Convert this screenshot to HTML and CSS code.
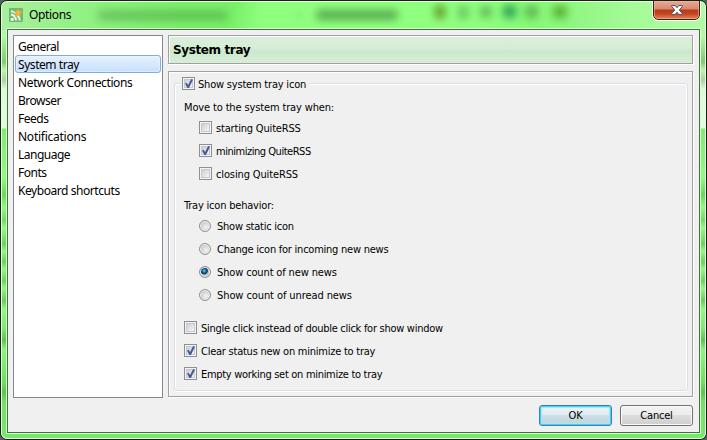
FILE: index.html
```
<!DOCTYPE html>
<html lang="en">
<head>
<meta charset="utf-8">
<title>Options</title>
<link rel="stylesheet" href="styles.css">
</head>
<body>
<div class="window">
  <div class="glass" aria-hidden="true">
    <i class="smudge s1"></i><i class="smudge s2"></i><i class="smudge s3"></i><i class="smudge s4"></i><i class="smudge s5"></i><i class="smudge s6"></i><i class="smudge s7"></i><i class="smudge s8"></i><i class="smudge s9"></i>
  </div>
  <header class="titlebar">
    <svg class="app-icon" viewBox="0 0 14 14">
      <rect width="14" height="14" rx="1" fill="#68bd70"/>
      <path d="M2 3.200q3 0 5 2.300M2 6.500q4.500.500 5 6M8 7q2.500 2 2.800 5.500" fill="none" stroke="#f4fff4" stroke-width="1.900"/>
      <circle cx="3.200" cy="11.300" r="1.600" fill="#f4fff4"/>
      <path d="M9.200 0l1.200 3 3.400.400-2.500 2.100.900 3.300-3-1.700-3 1.700.900-3.300L4.600 3.400 8 3z" fill="#f0b541" stroke="#d49a3a" stroke-width=".4"/>
    </svg>
    <h1 class="title">Options</h1>
    <button class="close" aria-label="Close">
      <svg viewBox="0 0 12 10" width="12" height="10"><path d="M.7.600h3.500L6 2.700 7.800.600h3.500v1L8.300 5l3 3.400v1H7.800L6 7.300 4.200 9.400H.700v-1L3.700 5 .7 1.600z" fill="#fff" stroke="#4c4a60" stroke-width="1"/></svg>
    </button>
  </header>
  <main class="client">
    <div class="panes">
      <ul class="categories">
        <li class="w1">General</li>
        <li class="w2 selected">System tray</li>
        <li class="w3">Network Connections</li>
        <li class="w4">Browser</li>
        <li class="w5">Feeds</li>
        <li class="w6">Notifications</li>
        <li class="w7">Language</li>
        <li class="w8">Fonts</li>
        <li class="w9">Keyboard shortcuts</li>
      </ul>
      <section class="page">
        <h2 class="frame heading"><span>System tray</span></h2>
        <div class="frame body">
          <div class="group">
            <label class="legend"><i class="check on"></i><span class="t1">Show system tray icon</span></label>
            <p class="caption t2">Move to the system tray when:</p>
            <div class="options">
              <label><i class="check"></i><span class="t3">starting QuiteRSS</span></label>
              <label><i class="check on"></i><span class="t4">minimizing QuiteRSS</span></label>
              <label><i class="check"></i><span class="t5">closing QuiteRSS</span></label>
            </div>
            <p class="caption second t6">Tray icon behavior:</p>
            <div class="options radios">
              <label><i class="radio"></i><span class="t7">Show static icon</span></label>
              <label><i class="radio"></i><span class="t8">Change icon for incoming new news</span></label>
              <label><i class="radio on"></i><span class="t9">Show count of new news</span></label>
              <label><i class="radio"></i><span class="t10">Show count of unread news</span></label>
            </div>
            <div class="options extras">
              <label><i class="check"></i><span class="t11">Single click instead of double click for show window</span></label>
              <label><i class="check on"></i><span class="t12">Clear status new on minimize to tray</span></label>
              <label><i class="check on"></i><span class="t13">Empty working set on minimize to tray</span></label>
            </div>
          </div>
        </div>
      </section>
    </div>
    <footer class="buttons">
      <button class="btn default">OK</button>
      <button class="btn">Cancel</button>
    </footer>
  </main>
</div>
</body>
</html>
```
FILE: styles.css
```
* { box-sizing: border-box; margin: 0; padding: 0; }
body { width: 707px; height: 440px; overflow: hidden; background: #555e63; color: #000; font: 11px/14px "DejaVu Sans Condensed", "DejaVu Sans", sans-serif; }
ul { list-style: none; }
.window { position: relative; display: flex; flex-direction: column; width: 707px; height: 440px; padding: 0 6px 6px; border: 1px solid #152112; border-radius: 7px; overflow: hidden; background: #7fe972; }
.glass { position: absolute; inset: 0; border-radius: 6px; border: 1px solid #e2ffdc; overflow: hidden;
  background:
    linear-gradient(90deg, #a9ee9e 0, #8ff181 90px, transparent 180px, transparent 520px, #a5fb98 630px, #b0fba5 100%) 0 0 / 100% 28px no-repeat,
    linear-gradient(100deg, #7af06a 0 230px, #90ff80 260px 480px, #7df26d 570px) 0 0 / 100% 28px no-repeat,
    linear-gradient(#a8f59b 0, #b3f9a6 34px, #7fcb72 60px, #bdf5b2 68px, #adcfa5 78px, #e1f8dc 87px, #e3fbdf 126px, #80e974 127px, #8efd7e 175px, #68da54 193px, #8efd7e 205px, #75d866 218px, #8efd7e 226px, #72ce64 242px, #8efd7e 249px, #72ce64 260px, #8efd7e 267px, #72ce64 279px, #8efd7e 286px, #71c862 299px, #8efd7e 307px, #7de86f 327px, #66bf58 338px, #8af77c 348px, #6de25b 380px, #5cc44f 390px, #75df67 400px, #76e969 100%); }
.smudge { position: absolute; display: block; filter: blur(4px); background: #438d3d; opacity: .65; border-radius: 4px; }
.s1 { left: 96px; top: 9px; width: 130px; height: 9px; opacity: .5; }
.s2 { left: 314px; top: 8px; width: 82px; height: 10px; opacity: .75; }
.s3 { left: 433px; top: 3px; width: 10px; height: 14px; background: #5a8c16; opacity: .9; }
.s4 { left: 456px; top: 4px; width: 11px; height: 13px; opacity: .5; }
.s5 { left: 478px; top: 4px; width: 12px; height: 12px; opacity: .6; }
.s6 { left: 501px; top: 3px; width: 13px; height: 13px; background: #209550; opacity: .9; }
.s7 { left: 523px; top: 4px; width: 13px; height: 12px; opacity: .65; }
.s8 { left: 551px; top: 4px; width: 14px; height: 12px; background: #449b19; opacity: .8; }
.s9 { left: 294px; top: 11px; width: 5px; height: 4px; opacity: .5; }
.titlebar { position: relative; display: flex; align-items: flex-start; height: 27px; padding-left: 2px; }
.app-icon { width: 14px; height: 14px; margin-top: 7px; }
.title { margin: 6px auto 0 6px; font: 12px/16px "Noto Sans", sans-serif; letter-spacing: -.35px; }
.close { display: flex; align-items: center; justify-content: center; width: 47px; height: 20px; margin: -1px 0 0; border: 1px solid #491b0e; outline: 1px solid #f3ffef; border-radius: 0 0 5px 5px; background: linear-gradient(#e8aa98 0, #d98870 8px, #b63a1a 9px, #c64620 13px, #e08760 100%); box-shadow: inset 0 0 0 1px #f2b9a58c; }
.client { position: relative; flex: 1; display: flex; flex-direction: column; width: 693px; border: 1px solid #3e7438; outline: 1px solid #dcfad7; margin-top: 1px; padding: 5px 5px 6px; background: #f0f0f0; }
.panes { display: flex; gap: 5px; height: 363px; }
.categories { width: 150px; height: 363px; padding: 1px; border: 1px solid #828790; background: #fff; font: 12px/20px "Noto Sans", sans-serif; letter-spacing: -.5px; }
.categories li { height: 18px; padding-left: 3px; white-space: nowrap; }
.categories .selected { border: 1px solid #84acdd; border-radius: 3px; padding-left: 2px; line-height: 18px; background: linear-gradient(#e8f2fe, #c5dffc); box-shadow: inset 0 0 0 1px #edf5ff80; }
.w3 { letter-spacing: -.37px; }
.w6 { letter-spacing: -.25px; }
.w2, .w9 { letter-spacing: -.44px; }
.page { display: flex; flex-direction: column; gap: 7px; width: 525px; }
.frame { width: 525px; border: 1px solid #a0a0a0; box-shadow: 1px 1px 0 #fff, inset 1px 1px 0 #fff; }
.heading { height: 29px; padding-left: 4px; background: linear-gradient(#dceedc 0, #d6edd6 12px, #cbeaca 15px, #d9ecd8 27px); font: bold 12px/29px "DejaVu Sans", sans-serif; letter-spacing: -.38px; }
.body { height: 326px; padding: 11px 4px 5px 5px; }
.group { width: 514px; height: 308px; padding-left: 9px; border: 1px solid #d5dfe5; border-radius: 3px; box-shadow: inset 1px 1px 0 #fff, inset -1px 0 0 #fff, 0 1px 0 #fff; }
label { display: flex; align-items: center; height: 13px; white-space: nowrap; }
.check + span { margin-top: 2px; }
.legend { width: max-content; margin: -7px 0 0 -4px; padding: 0 3px 0 2px; gap: 3px; background: #f0f0f0; }
.check { flex: none; width: 13px; height: 13px; border: 1px solid #8e8f8f; background: linear-gradient(135deg, #cbcfd5, #f6f6f6) 2px 2px / 7px 7px no-repeat #f4f4f4; box-shadow: inset 0 0 0 1px #f4f4f4, inset 0 0 0 2px #c5c9cf; }
.check.on { position: relative; }
.check.on::after { content: ""; position: absolute; left: 2px; top: 1px; width: 8px; height: 9px; background: #45599b; clip-path: polygon(0 49%, 20% 42%, 38% 67%, 77% 0, 100% 7%, 49% 100%, 30% 100%); }
.caption { margin-top: 11px; height: 14px; white-space: nowrap; }
.caption.second { margin-top: 19px; }
.options { display: flex; flex-direction: column; gap: 10px; margin: 6px 0 0 15px; }
.options label { gap: 4px; }
.radio { flex: none; align-self: flex-start; width: 12px; height: 12px; border: 1px solid #8e8f8f; border-radius: 50%; background: radial-gradient(circle at 60% 60%, #f4f4f4, #bfc2c7 75%); box-shadow: inset 0 0 0 1px #f4f4f4; }
.radio.on { background: radial-gradient(circle at 42% 38%, #82d6f4 0, #187eb2 1.500px, #0b3354 3.200px, #b8c0c8 4px); }
.options.radios { margin-top: 7px; }
.radios label { gap: 6px; }
.options.extras { margin: 19px 0 0; }
.t1, .t6 { letter-spacing: -.2px; }
.t2, .t9 { letter-spacing: -.14px; }
.t3 { letter-spacing: -.18px; }
.t4 { letter-spacing: -.47px; }
.t5 { letter-spacing: -.13px; }
.t7, .t8 { letter-spacing: -.24px; }
.t10 { letter-spacing: -.09px; }
.t11 { letter-spacing: -.28px; }
.t12 { letter-spacing: -.24px; }
.t13 { letter-spacing: -.3px; }
.buttons { display: flex; justify-content: flex-end; gap: 8px; margin: 7px 1px 0 0; }
.btn { width: 73px; height: 21px; border: 1px solid #707070; border-radius: 3px; background: linear-gradient(#f3f3f3 0, #ebebeb 49%, #dddddd 50%, #cfcfcf 100%); box-shadow: inset 0 0 0 1px #fbfbfb; font: 11px/19px "DejaVu Sans Condensed", sans-serif; color: #000; letter-spacing: -.2px; }
.btn.default { border-color: #3c7fb1; background: linear-gradient(#eef5f8 0, #dfebf0 49%, #cddfe7 50%, #bfd2dc 100%); box-shadow: inset 0 0 0 1px #42d2f7, inset 0 0 1px 2px #a6e4f7; }
```
